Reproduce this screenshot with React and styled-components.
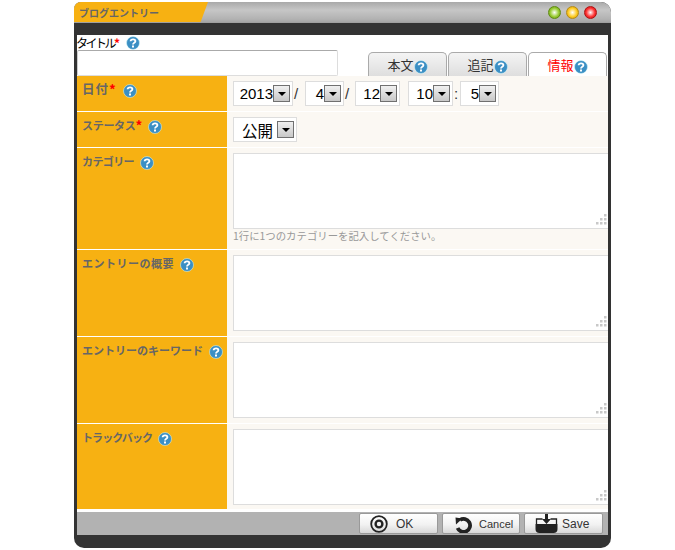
import React from "react";
import styled, { createGlobalStyle } from "styled-components";

const GlobalStyle = createGlobalStyle`
  body {
    margin: 0;
    background: #fff;
    font-family: "Noto Sans CJK JP", "Liberation Sans", sans-serif;
  }
`;

const Page = styled.div`
  padding: 2px 0 0 74px;
`;

const Window = styled.div`
  width: 537px;
  height: 546px;
  display: flex;
  flex-direction: column;
  background: #333;
  border-radius: 7px 10px 10px 10px;
  overflow: hidden;
`;

const TitleBar = styled.div`
  height: 20px;
  display: flex;
  align-items: center;
  justify-content: space-between;
  padding-right: 14px;
  background: linear-gradient(#a9a9a9, #c6c6c6 40%, #b2b2b2 85%, #a6a6a6);
  border-bottom: 1px solid #a0a0a0;
`;

const TitleTab = styled.div`
  width: 134px;
  height: 20px;
  padding-left: 5px;
  box-sizing: border-box;
  display: flex;
  align-items: center;
  background: #f7b112;
  clip-path: polygon(0 0, 100% 0, 94.5% 100%, 0 100%);
  color: #666;
  font-size: 10px;
  font-weight: 700;
`;

const Lights = styled.div`
  display: flex;
  gap: 5px;
`;

const Light = styled.span`
  width: 13px;
  height: 13px;
  border-radius: 50%;
  border: 1px solid ${(p) => p.edge};
  box-sizing: border-box;
  background: radial-gradient(circle at 50% 50%, #fff 0, ${(p) => p.color} 55%, ${(p) => p.edge} 100%);
`;

const DarkStrip = styled.div`
  height: 12px;
  flex: none;
`;

const Content = styled.div`
  flex: 1;
  margin: 0 3px;
  display: flex;
  flex-direction: column;
  background: #fff;
`;

const TopRow = styled.div`
  height: 41px;
  display: flex;
  justify-content: space-between;
  align-items: flex-end;
`;

const TitleField = styled.div`
  display: flex;
  flex-direction: column;
`;

const TitleLabel = styled.div`
  height: 15px;
  display: flex;
  align-items: center;
  font-size: 12px;
  line-height: 15px;
  color: #000;
  svg {
    margin-left: 6px;
  }
`;

const Squeezed = styled.span`
  letter-spacing: -2.5px;
  margin-left: -1px;
`;

const Star = styled.span`
  color: #f00;
  font-weight: 700;
`;

const LabelStar = styled(Star)`
  font-size: 13.5px;
`;

const TitleInput = styled.input`
  width: 261px;
  height: 26px;
  box-sizing: border-box;
  border: 1px solid #ddd;
  border-top: 1px solid #aaa;
  border-left: 1px solid #ccc;
  border-radius: 2px;
  padding: 0;
  background: #fff;
  outline: none;
`;

const Tabs = styled.div`
  display: flex;
  gap: 1px;
  padding-right: 1px;
`;

const Tab = styled.div`
  width: 79px;
  height: 24px;
  box-sizing: border-box;
  display: flex;
  align-items: center;
  justify-content: center;
  padding-bottom: 1px;
  border: 1px solid #aaa;
  border-bottom: none;
  border-radius: 5px 5px 0 0;
  background: ${(p) => (p.active ? "#fff" : "linear-gradient(#f4f4f4, #dedede)")};
  color: ${(p) => (p.active ? "#f00" : "#333")};
  font-size: 13px;
  svg {
    margin-top: 5px;
  }
`;

const Row = styled.div`
  height: ${(p) => p.h}px;
  flex: none;
  display: flex;
  box-sizing: border-box;
  border-bottom: 1px solid #fff;
`;

const Label = styled.div`
  width: 150px;
  flex: none;
  box-sizing: border-box;
  padding: 4px 0 0 5px;
  display: flex;
  align-items: flex-start;
  background: #f7b112;
  color: #666;
  font-size: ${(p) => (p.wide ? 12.5 : 11)}px;
  font-weight: 700;
  line-height: 18px;
  letter-spacing: ${(p) => p.track || 0}px;
  white-space: nowrap;
  svg {
    margin: 4px 0 0 6px;
  }
`;

const Cell = styled.div`
  flex: 1;
  box-sizing: border-box;
  padding: 5px 0 0 6px;
  background: #fbf8f3;
  display: flex;
  flex-direction: ${(p) => (p.column ? "column" : "row")};
  align-items: flex-start;
`;

const SelectBox = styled.div`
  height: 25px;
  box-sizing: border-box;
  padding: 0 2px 0 6px;
  display: flex;
  align-items: center;
  justify-content: flex-end;
  width: ${(p) => p.w}px;
  border: 1px solid #ddd;
  background: #fff;
  color: #000;
  font-family: "Liberation Sans", sans-serif;
  font-size: 15px;
`;

const StatusText = styled.span`
  font-family: "Noto Sans CJK JP", sans-serif;
  font-size: 15.5px;
  margin-right: 4px;
`;

const Arrow = styled.span`
  width: 17px;
  height: 17px;
  box-sizing: border-box;
  flex: none;
  display: flex;
  align-items: center;
  justify-content: center;
  border: 1px solid #707070;
  background: linear-gradient(#f0f0f0, #c8c8c8);
  &::after {
    content: "";
    border: 4px solid transparent;
    border-top: 4px solid #000;
    border-bottom: none;
  }
`;

const Sep = styled.span`
  height: 25px;
  width: ${(p) => p.w}px;
  box-sizing: border-box;
  padding-left: 1px;
  flex: none;
  display: flex;
  align-items: center;
  font-family: "Liberation Sans", sans-serif;
  font-size: 15px;
  color: #333;
`;

const AreaWrap = styled.div`
  position: relative;
  width: 100%;
  height: 76px;
  flex: none;
`;

const Area = styled.textarea`
  display: block;
  width: 100%;
  height: 100%;
  box-sizing: border-box;
  border: 1px solid #ddd;
  border-right: none;
  padding: 2px;
  background: #fff;
  resize: none;
  outline: none;
`;

const Grip = styled.svg`
  position: absolute;
  right: 1px;
  bottom: 3px;
`;

const Hint = styled.div`
  color: #999;
  font-size: 10.4px;
  line-height: 14px;
`;

const Footer = styled.div`
  height: 23px;
  flex: none;
  margin-top: 2px;
  padding-right: 5px;
  display: flex;
  justify-content: flex-end;
  gap: 4px;
  background: #b2b2b2;
`;

const Button = styled.button`
  width: ${(p) => p.w}px;
  height: 21px;
  margin-top: 1px;
  padding: 0 0 0 ${(p) => p.pad}px;
  box-sizing: border-box;
  display: flex;
  align-items: center;
  gap: ${(p) => p.gap}px;
  border: 1px solid #999;
  border-radius: 2px;
  background: linear-gradient(#fff, #f2f2f2 55%, #d8d8d8);
  color: #333;
  font-family: "Liberation Sans", sans-serif;
  font-size: ${(p) => p.size}px;
`;

const BottomStrip = styled.div`
  height: 13px;
  flex: none;
`;

const Help = () => (
  <svg width="14" height="14" viewBox="0 0 14 14" style={{ flex: "none" }}>
    <circle cx="7" cy="7" r="6.5" fill="#3b8fc4" stroke="#dff" strokeWidth="0.5" />
    <path d="M4.6 5.2 C4.8 2.8 9.4 2.8 9.4 5.2 C9.4 6.8 7 6.6 7 8.4" fill="none" stroke="#fff" strokeWidth="1.8" />
    <rect x="6" y="9.5" width="2" height="2" fill="#fff" />
  </svg>
);

const GripDots = () => (
  <Grip width="12" height="12" viewBox="0 0 12 12" fill="#c8c8c8">
    {[[9, 0], [5, 4], [9, 4], [1, 8], [5, 8], [9, 8]].map(([x, y]) => (
      <rect key={`${x}-${y}`} x={x} y={y} width="2.5" height="2.5" />
    ))}
  </Grip>
);

const TextBox = () => (
  <AreaWrap>
    <Area />
    <GripDots />
  </AreaWrap>
);

const Select = ({ w, children }) => (
  <SelectBox w={w}>
    {children}
    <Arrow />
  </SelectBox>
);

const Field = ({ h, label, required, wide, track, children, column }) => (
  <Row h={h}>
    <Label wide={wide} track={track}>
      {label}
      {required && <LabelStar>*</LabelStar>}
      <Help />
    </Label>
    <Cell column={column}>{children}</Cell>
  </Row>
);

const OkIcon = () => (
  <svg width="18" height="18" viewBox="0 0 18 18" fill="none" stroke="#222">
    <circle cx="9" cy="9" r="7.8" strokeWidth="1.8" />
    <circle cx="9" cy="9" r="3.4" strokeWidth="2.4" />
  </svg>
);

const CancelIcon = () => (
  <svg width="18" height="18" viewBox="0 0 18 18">
    <path d="M6 5 A6.5 6.5 0 1 1 3.6 13" fill="none" stroke="#222" strokeWidth="3.8" />
    <path d="M1.5 2.5 L8.5 3.5 L2 9.5 Z" fill="#222" />
  </svg>
);

const SaveIcon = () => (
  <svg width="23" height="19" viewBox="0 0 23 19">
    <path d="M1.5 10 V5 H7.5 M15.5 5 H21.5 V10" fill="none" stroke="#222" strokeWidth="1.3" />
    <path d="M0.5 10 H22.5 V15 Q22.5 19 18.5 19 H4.5 Q0.5 19 0.5 15 Z" fill="#222" />
    <path d="M10 0 H13 V5 H16 L11.5 10 L7 5 H10 Z" fill="#222" />
  </svg>
);

export default function App() {
  return (
    <Page>
      <GlobalStyle />
      <Window>
        <TitleBar>
          <TitleTab>ブログエントリー</TitleTab>
          <Lights>
            <Light color="#9c3" edge="#5f8a10" />
            <Light color="#fc2" edge="#b88a10" />
            <Light color="#f33" edge="#b01010" />
          </Lights>
        </TitleBar>
        <DarkStrip />
        <Content>
          <TopRow>
            <TitleField>
              <TitleLabel>
                <Squeezed>タイトル</Squeezed>
                <Star>*</Star>
                <Help />
              </TitleLabel>
              <TitleInput />
            </TitleField>
            <Tabs>
              <Tab>本文<Help /></Tab>
              <Tab>追記<Help /></Tab>
              <Tab active>情報<Help /></Tab>
            </Tabs>
          </TopRow>
          <Field h={36} label="日付" required wide track={1}>
            <Select w={60}>2013</Select>
            <Sep w={12}>/</Sep>
            <Select w={39}>4</Select>
            <Sep w={11}>/</Sep>
            <Select w={45}>12</Select>
            <Sep w={8} />
            <Select w={45}>10</Select>
            <Sep w={7}>:</Sep>
            <Select w={39}>5</Select>
          </Field>
          <Field h={36} label="ステータス" required track={-0.3}>
            <Select w={64}><StatusText>公開</StatusText></Select>
          </Field>
          <Field h={102} label="カテゴリー" track={-0.6} column>
            <TextBox />
            <Hint>1行に1つのカテゴリーを記入してください。</Hint>
          </Field>
          <Field h={87} label="エントリーの概要" track={0.5}>
            <TextBox />
          </Field>
          <Field h={87} label="エントリーのキーワード">
            <TextBox />
          </Field>
          <Field h={86} label="トラックバック" track={-0.9}>
            <TextBox />
          </Field>
          <Footer>
            <Button w={79} pad={10} gap={8} size={12}><OkIcon />OK</Button>
            <Button w={78} pad={11} gap={7} size={11}><CancelIcon />Cancel</Button>
            <Button w={79} pad={10} gap={4} size={12}><SaveIcon />Save</Button>
          </Footer>
        </Content>
        <BottomStrip />
      </Window>
    </Page>
  );
}
